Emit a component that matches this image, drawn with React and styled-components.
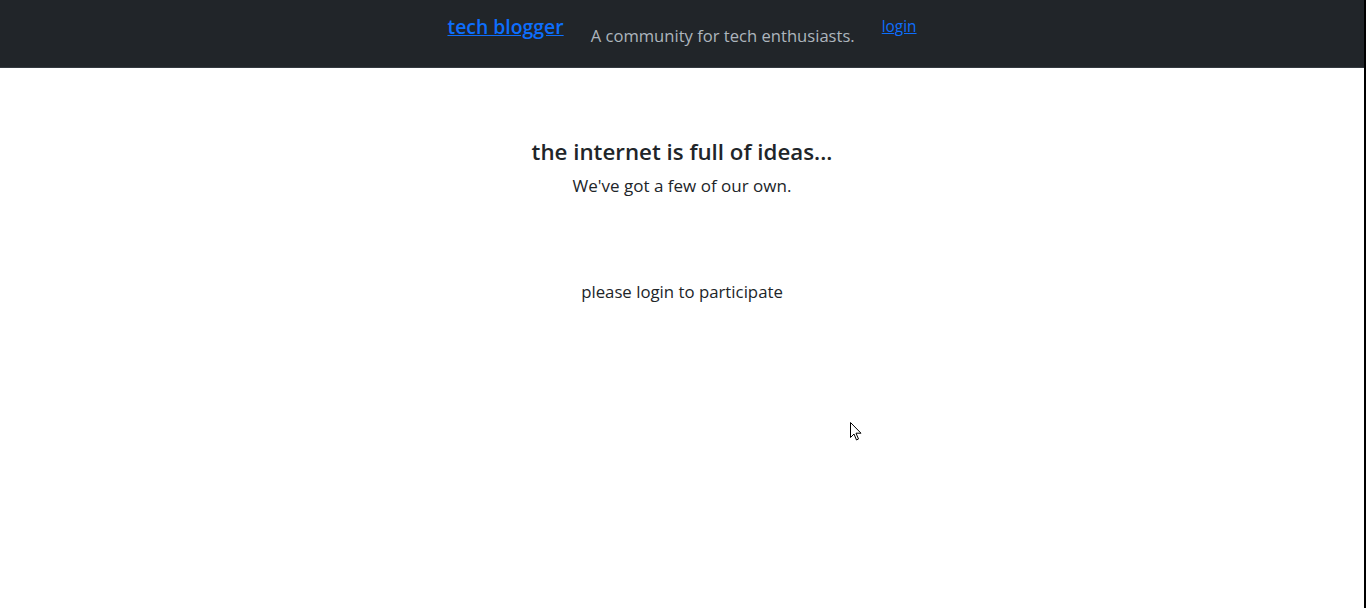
import React from "react";
import styled, { createGlobalStyle } from "styled-components";

const GlobalStyle = createGlobalStyle`
  html, body {
    margin: 0;
    padding: 0;
    background: #000;
  }
  body {
    font-family: "Open Sans", "Noto Sans", sans-serif;
    color: #212529;
  }
`;

function App() {
  return (
    <>
      <GlobalStyle />
      <Page>
        <Header>
          <Brand href="#">tech blogger</Brand>
          <Tagline>A community for tech enthusiasts.</Tagline>
          <LoginLink href="#">login</LoginLink>
        </Header>
        <Main>
          <Hero>
            <Heading>the internet is full of ideas...</Heading>
            <Subtitle>We've got a few of our own.</Subtitle>
          </Hero>
          <Notice>please login to participate</Notice>
        </Main>
        <Cursor viewBox="0 0 12 19" width="12" height="19">
          <path
            d="M0.5 0.5 L0.5 15.5 L4 12 L6.5 18 L8.5 17 L6 11.2 L11 11.2 Z"
            fill="#fff"
            stroke="#000"
            strokeWidth="1"
            strokeLinejoin="miter"
          />
        </Cursor>
      </Page>
    </>
  );
}

export default App;

const Page = styled.div`
  position: relative;
  width: 1364px;
  height: 608px;
  background: #fff;
  overflow: hidden;
`;

const Header = styled.header`
  height: 67px;
  background: #212529;
  border-bottom: 1px solid #343a40;
  display: flex;
  justify-content: center;
  align-items: flex-start;
  gap: 27px;
`;

const Brand = styled.a`
  margin-top: 13px;
  font-size: 19.4px;
  font-weight: 600;
  line-height: 28px;
  color: #0d6efd;
  text-decoration: underline;
`;

const Tagline = styled.span`
  margin-top: 23px;
  font-size: 16.6px;
  line-height: 25px;
  color: #adb5bd;
`;

const LoginLink = styled.a`
  margin-top: 17px;
  font-size: 15.4px;
  line-height: 20px;
  color: #0d6efd;
  text-decoration: underline;
`;

const Main = styled.main`
  display: flex;
  flex-direction: column;
  align-items: center;
  padding-top: 68px;
`;

const Hero = styled.div`
  display: flex;
  flex-direction: column;
  align-items: center;
`;

const Heading = styled.h1`
  margin: 0;
  font-size: 22.3px;
  font-weight: 600;
  line-height: 32px;
  color: #212529;
`;

const Subtitle = styled.p`
  margin: 5px 0 0;
  font-size: 17px;
  line-height: 26px;
  color: #212529;
`;

const Notice = styled.p`
  margin: 80px 0 0;
  font-size: 16.8px;
  line-height: 26px;
  color: #212529;
`;

const Cursor = styled.svg`
  position: absolute;
  left: 850px;
  top: 422px;
`;
